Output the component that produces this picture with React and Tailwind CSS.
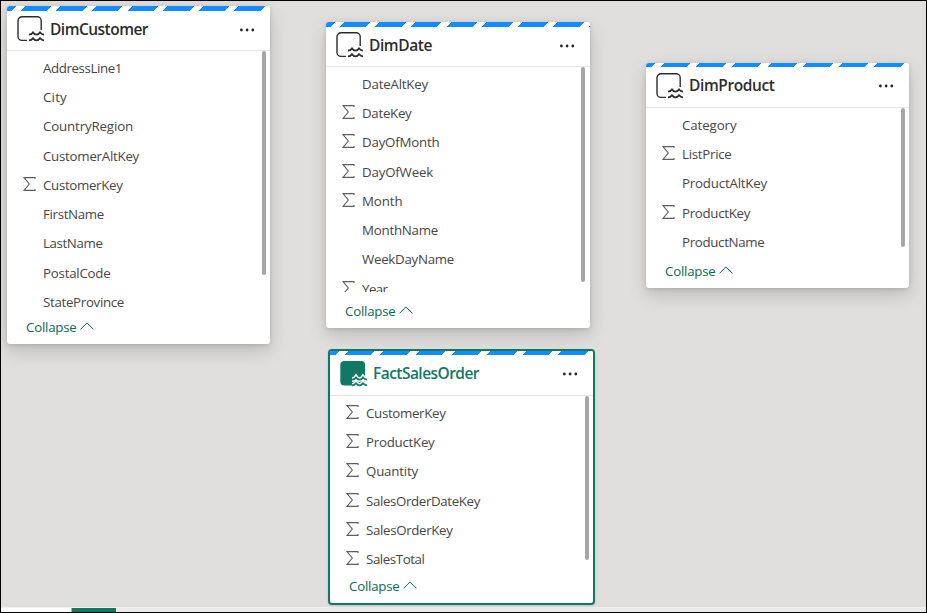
import React from "react";

const SANS = "font-['Open_Sans','Noto_Sans',sans-serif]";

// [label, isNumeric, rendered label width]
const customerFields = [
  ["AddressLine1", false, 79],
  ["City", false, 24],
  ["CountryRegion", false, 90],
  ["CustomerAltKey", false, 96],
  ["CustomerKey", true, 79.5],
  ["FirstName", false, 61],
  ["LastName", false, 59.5],
  ["PostalCode", false, 67.5],
  ["StateProvince", false, 81],
];
const dateFields = [
  ["DateAltKey", false, 66],
  ["DateKey", true, 49.5],
  ["DayOfMonth", true, 77.5],
  ["DayOfWeek", true, 71],
  ["Month", true, 40.5],
  ["MonthName", false, 76],
  ["WeekDayName", false, 92],
  ["Year", true, 25.5],
];
const productFields = [
  ["Category", false, 54.5],
  ["ListPrice", true, 49.5],
  ["ProductAltKey", false, 85],
  ["ProductKey", true, 68],
  ["ProductName", false, 82.5],
];
const salesFields = [
  ["CustomerKey", true, 79.5],
  ["ProductKey", true, 68.5],
  ["Quantity", true, 52],
  ["SalesOrderDateKey", true, 114],
  ["SalesOrderKey", true, 86.5],
  ["SalesTotal", true, 58.5],
];

// Label whose tracking is adjusted so that it takes exactly the given width.
function FitText({ text, width, className }) {
  const ref = React.useRef(null);
  React.useLayoutEffect(() => {
    const el = ref.current;
    const fit = () => {
      el.style.letterSpacing = "0px";
      const natural = el.getBoundingClientRect().width;
      el.style.letterSpacing = `${(width - natural) / text.length}px`;
    };
    fit();
    document.fonts.ready.then(fit);
  }, [text, width]);
  return (
    <span ref={ref} className={`inline-block whitespace-nowrap ${className}`}>
      {text}
    </span>
  );
}

const WAVE_TOP = "M12 19.6c2.3 0 3-.8 4-2.2 1 1.4 1.8 2.2 3.500 2.200s2.500-.8 3.500-2.200c1.100 1.400 1.700 2.200 4 2.200";
const WAVE_BOTTOM = "M12 25.4c2.3 0 3-.8 4-2.2 1 1.4 1.8 2.2 3.500 2.200s2.500-.8 3.500-2.200c1.100 1.400 1.700 2.200 4 2.200";

function TableIcon({ filled }) {
  if (filled) {
    return (
      <svg width="28" height="27" viewBox="0 0 28 27" fill="none" className="shrink-0">
        <rect x="0.3" y="1" width="24.8" height="24.6" rx="4" fill="#117865" />
        <path d={WAVE_TOP} stroke="#fff" strokeWidth="4.6" />
        <path d={WAVE_BOTTOM} stroke="#fff" strokeWidth="4.6" />
        <path d={WAVE_TOP} stroke="#117865" strokeWidth="1.8" />
        <path d={WAVE_BOTTOM} stroke="#117865" strokeWidth="1.8" />
      </svg>
    );
  }
  return (
    <svg width="28" height="27" viewBox="0 0 28 27" fill="none" stroke="#2d2c2b" className="shrink-0">
      <path
        d="M10 25.4H5a4 4 0 0 1-4-4V5.8a4 4 0 0 1 4-4h15.2a4 4 0 0 1 4 4v9.2"
        strokeWidth="1.4"
      />
      <path d={WAVE_TOP} strokeWidth="1.8" />
      <path d={WAVE_BOTTOM} strokeWidth="1.8" />
    </svg>
  );
}

function Sigma() {
  return (
    <svg width="13" height="14" viewBox="0 0 13 14" fill="none" stroke="#605e5c" strokeWidth="1.1" className="mb-[2px]">
      <path d="M12 2V.6H1L6.3 7 1 13.4h11V12" />
    </svg>
  );
}

function TableCard({ place, title, titleWidth, fields, selected, stripe, bar }) {
  return (
    <section
      className={`absolute flex flex-col overflow-hidden bg-white ${place} ${
        selected
          ? "rounded-[4px] border-2 border-[#117865] shadow-[0_1px_3px_rgba(0,0,0,0.12)]"
          : "rounded-[3px] shadow-[0_7px_18px_rgba(0,0,0,0.17),0_1px_4px_rgba(0,0,0,0.12)]"
      }`}
    >
      <div
        className={`shrink-0 bg-[repeating-linear-gradient(135deg,#118dff_0px,#118dff_6.4px,#fff_6.4px,#fff_12.8px,#118dff_12.8px,#118dff_25.2px)] ${stripe}`}
      />
      <header className="flex min-h-0 flex-1 items-center border-b border-[#e6e6e6] pr-[15px] pb-1 pl-[10px]">
        <TableIcon filled={selected} />
        <FitText
          text={title}
          width={titleWidth}
          className={`ml-[5px] text-[15.5px] leading-5 font-semibold ${selected ? "text-[#117865]" : "text-[#2d2c2b]"}`}
        />
        <svg width="16" height="4" viewBox="0 0 16 4" fill="#252423" className="mt-[2px] ml-auto">
          <circle cx="2.4" cy="2" r="1.4" />
          <circle cx="8.1" cy="2" r="1.4" />
          <circle cx="13.8" cy="2" r="1.4" />
        </svg>
      </header>
      <div className={`flex shrink-0 items-start overflow-hidden ${bar.list}`}>
        <ul className="flex-1 pt-[2.3px]">
          {fields.map(([label, numeric, width]) => (
            <li key={label} className="flex h-[29.25px] items-center pl-4">
              <span className="flex w-5 shrink-0">{numeric && <Sigma />}</span>
              <FitText text={label} width={width} className="text-[13.3px] leading-5 text-[#484644]" />
            </li>
          ))}
        </ul>
        <div className={`w-1 rounded-full bg-[#a6a6a6] ${bar.thumb}`} />
      </div>
      <footer className="flex h-9 shrink-0 items-center pt-0.5 pl-[19px] text-[#0c695a]">
        <FitText text="Collapse" width={50.5} className="text-[13.3px] leading-5" />
        <svg width="14" height="8" viewBox="0 0 14 8" fill="none" stroke="currentColor" className="mb-0.5 ml-[3.500px]">
          <path d="M.5 7.4 7 .9l6.500 6.500" />
        </svg>
      </footer>
    </section>
  );
}

export default function App() {
  return (
    <main
      className={`relative flex h-[613px] w-[927px] flex-col justify-end overflow-hidden border border-black bg-[#e1dfdd] ${SANS}`}
    >
      <TableCard
        place="left-[6px] top-[5px] h-[338px] w-[263px]"
        title="DimCustomer"
        titleWidth={98}
        fields={customerFields}
        stripe="h-[5px]"
        bar={{ list: "h-[257px]", thumb: "mr-1 h-[224px]" }}
      />
      <TableCard
        place="left-[325px] top-[21px] h-[306px] w-[264px]"
        title="DimDate"
        titleWidth={63}
        fields={dateFields}
        stripe="h-[5px]"
        bar={{ list: "h-[225px]", thumb: "mr-[5px] h-[215px]" }}
      />
      <TableCard
        place="left-[645px] top-[62px] h-[225px] w-[263px]"
        title="DimProduct"
        titleWidth={85.5}
        fields={productFields}
        stripe="h-[4px]"
        bar={{ list: "h-[144px]", thumb: "mr-1 h-[139px]" }}
      />
      <TableCard
        place="left-[327px] top-[348px] h-[256px] w-[267px]"
        title="FactSalesOrder"
        titleWidth={106}
        fields={salesFields}
        selected
        stripe="h-[4px]"
        bar={{ list: "h-[171px]", thumb: "mr-1 h-[164px]" }}
      />
      <div className="flex h-[5px] border-t border-[#f0efee] bg-[#eaeaea]">
        <div className="w-[70px] bg-white" />
        <div className="w-px bg-[#b3b0ad]" />
        <div className="w-11 bg-[#117865]" />
      </div>
    </main>
  );
}
